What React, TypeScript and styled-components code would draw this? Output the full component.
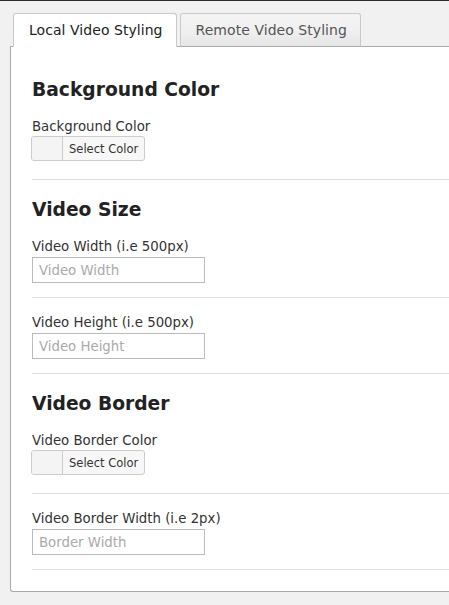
import React from 'react';
import styled, { createGlobalStyle } from 'styled-components';

const GlobalStyle = createGlobalStyle`
  html, body {
    margin: 0;
    padding: 0;
    background: #f1f1f1;
  }
  body {
    font-family: "DejaVu Sans", Verdana, sans-serif;
    color: #333;
    overflow: hidden;
  }
`;

const Page = styled.div`
  border-top: 1px solid #2b2b2b;
  padding: 12px 0 0 10px;
  min-height: 605px;
  box-sizing: border-box;
`;

const TabRow = styled.div`
  display: flex;
  gap: 3px;
  padding-left: 3px;
  position: relative;
  z-index: 1;
`;

const Tab = styled.div<{ active?: boolean }>`
  height: 34px;
  box-sizing: border-box;
  padding: 0 13px 0 15px;
  display: flex;
  align-items: center;
  font-size: 14px;
  letter-spacing: 0.05px;
  border: 1px solid #c9c9c9;
  border-bottom: ${p => (p.active ? '1px solid #fff' : '1px solid #aaa')};
  border-radius: 3px 3px 0 0;
  color: ${p => (p.active ? '#222' : '#555')};
  background: ${p => (p.active ? '#fff' : 'linear-gradient(#f4f4f4 0%, #f0f0f0 50%, #e6e6e6 100%)')};
  margin-bottom: -1px;
`;

const Panel = styled.div`
  background: #fff;
  border: 1px solid #aaa;
  border-right: none;
  border-radius: 0 0 0 3px;
  padding: 31px 0 21px 21px;
`;

const Heading = styled.h3<{ first?: boolean }>`
  margin: 0;
  padding-top: ${p => (p.first ? '0' : '18px')};
  font-size: 18.7px;
  line-height: 24px;
  font-weight: bold;
  color: #222;
`;

const Field = styled.div`
  padding: 16px 0 14px;
  border-bottom: 1px solid #dedede;
`;

const Label = styled.div`
  font-size: 13.3px;
  line-height: 18px;
  color: #333;
`;

const ColorButton = styled.div`
  display: inline-flex;
  vertical-align: top;
  height: 25px;
  margin: 0 0 4px -1px;
  border: 1px solid #ccc;
  border-radius: 3px;
  background: #f7f7f7;
  box-sizing: border-box;
  overflow: hidden;
`;

const Swatch = styled.span`
  width: 30px;
  background: #f4f4f4;
  border-right: 1px solid #ccc;
`;

const ColorText = styled.span`
  padding: 0 6px;
  display: flex;
  align-items: center;
  font-size: 11.5px;
  color: #333;
`;

const TextInput = styled.input`
  display: block;
  margin-top: 1px;
  width: 173px;
  height: 26px;
  box-sizing: border-box;
  border: 1px solid #bbb;
  padding: 0 6px;
  font-family: inherit;
  font-size: 13.3px;
  color: #333;
  background: #fff;
  outline: none;

  &::placeholder {
    color: #aaa;
  }
`;

const ColorField = ({ label }: { label: string }) => (
  <Field>
    <Label>{label}</Label>
    <ColorButton>
      <Swatch />
      <ColorText>Select Color</ColorText>
    </ColorButton>
  </Field>
);

const InputField = ({ label, placeholder }: { label: string; placeholder: string }) => (
  <Field>
    <Label>{label}</Label>
    <TextInput placeholder={placeholder} />
  </Field>
);

export default function App() {
  return (
    <>
      <GlobalStyle />
      <Page>
        <TabRow>
          <Tab active>Local Video Styling</Tab>
          <Tab>Remote Video Styling</Tab>
        </TabRow>
        <Panel>
          <Heading first>Background Color</Heading>
          <ColorField label="Background Color" />

          <Heading>Video Size</Heading>
          <InputField label="Video Width (i.e 500px)" placeholder="Video Width" />
          <InputField label="Video Height (i.e 500px)" placeholder="Video Height" />

          <Heading>Video Border</Heading>
          <ColorField label="Video Border Color" />
          <InputField label="Video Border Width (i.e 2px)" placeholder="Border Width" />
        </Panel>
      </Page>
    </>
  );
}
